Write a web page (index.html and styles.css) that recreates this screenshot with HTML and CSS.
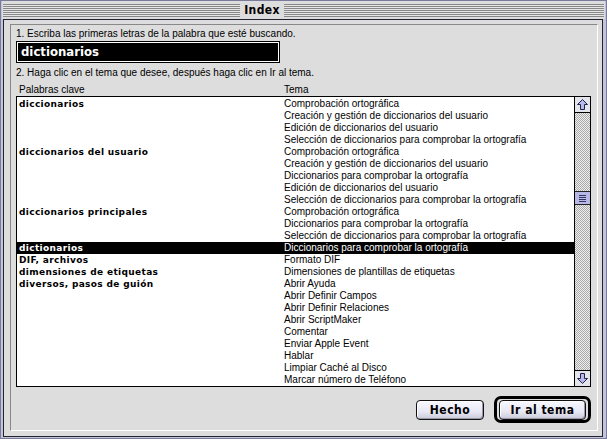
FILE: index.html
```html
<!DOCTYPE html>
<html lang="es">
<head>
<meta charset="utf-8">
<title>Index</title>
<link rel="stylesheet" href="styles.css">
</head>
<body>
<div class="window">
  <div class="titlebar"><span class="title">Index</span></div>
  <div class="body">
    <div class="panel">
      <p class="step step1">1. Escriba las primeras letras de la palabra que esté buscando.</p>
      <div class="search">dictionarios</div>
      <p class="step step2">2. Haga clic en el tema que desee, después haga clic en Ir al tema.</p>
      <div class="cols"><span class="col-kw">Palabras clave</span><span class="col-tema">Tema</span></div>
      <div class="list">
        <div class="rows">
          <div class="row"><span class="kw">diccionarios</span><span class="tema">Comprobación ortográfica</span></div>
          <div class="row"><span class="kw"></span><span class="tema">Creación y gestión de diccionarios del usuario</span></div>
          <div class="row"><span class="kw"></span><span class="tema">Edición de diccionarios del usuario</span></div>
          <div class="row"><span class="kw"></span><span class="tema">Selección de diccionarios para comprobar la ortografía</span></div>
          <div class="row"><span class="kw">diccionarios del usuario</span><span class="tema">Comprobación ortográfica</span></div>
          <div class="row"><span class="kw"></span><span class="tema">Creación y gestión de diccionarios del usuario</span></div>
          <div class="row"><span class="kw"></span><span class="tema">Diccionarios para comprobar la ortografía</span></div>
          <div class="row"><span class="kw"></span><span class="tema">Edición de diccionarios del usuario</span></div>
          <div class="row"><span class="kw"></span><span class="tema">Selección de diccionarios para comprobar la ortografía</span></div>
          <div class="row"><span class="kw">diccionarios principales</span><span class="tema">Comprobación ortográfica</span></div>
          <div class="row"><span class="kw"></span><span class="tema">Diccionarios para comprobar la ortografía</span></div>
          <div class="row"><span class="kw"></span><span class="tema">Selección de diccionarios para comprobar la ortografía</span></div>
          <div class="row selected"><span class="kw">dictionarios</span><span class="tema">Diccionarios para comprobar la ortografía</span></div>
          <div class="row"><span class="kw">DIF, archivos</span><span class="tema">Formato DIF</span></div>
          <div class="row"><span class="kw">dimensiones de etiquetas</span><span class="tema">Dimensiones de plantillas de etiquetas</span></div>
          <div class="row"><span class="kw">diversos, pasos de guión</span><span class="tema">Abrir Ayuda</span></div>
          <div class="row"><span class="kw"></span><span class="tema">Abrir Definir Campos</span></div>
          <div class="row"><span class="kw"></span><span class="tema">Abrir Definir Relaciones</span></div>
          <div class="row"><span class="kw"></span><span class="tema">Abrir ScriptMaker</span></div>
          <div class="row"><span class="kw"></span><span class="tema">Comentar</span></div>
          <div class="row"><span class="kw"></span><span class="tema">Enviar Apple Event</span></div>
          <div class="row"><span class="kw"></span><span class="tema">Hablar</span></div>
          <div class="row"><span class="kw"></span><span class="tema">Limpiar Caché al Disco</span></div>
          <div class="row"><span class="kw"></span><span class="tema">Marcar número de Teléfono</span></div>
        </div>
        <div class="scrollbar">
          <div class="arrow arrow-up">
            <svg width="13" height="13" viewBox="0 0 13 13"><path d="M6.5 1.5 L11.5 6.5 L8.5 6.5 L8.5 11.5 L4.5 11.5 L4.5 6.5 L1.5 6.5 Z" fill="#b8b8f0" stroke="#222244" stroke-width="1"/></svg>
          </div>
          <div class="track">
            <div class="thumb"><span></span><span></span><span></span><span></span></div>
          </div>
          <div class="arrow arrow-down">
            <svg width="13" height="13" viewBox="0 0 13 13"><path d="M6.5 11.5 L11.5 6.5 L8.5 6.5 L8.5 1.5 L4.5 1.5 L4.5 6.5 L1.5 6.5 Z" fill="#b8b8f0" stroke="#222244" stroke-width="1"/></svg>
          </div>
        </div>
      </div>
      <div class="buttons">
        <button class="btn btn-done">Hecho</button>
        <span class="default-ring"><button class="btn btn-default">Ir al tema</button></span>
      </div>
    </div>
  </div>
</div>
</body>
</html>
```
FILE: styles.css
```css
* { box-sizing: border-box; }
html, body { margin: 0; padding: 0; background: #dddddd; }

.window {
  width: 607px;
  height: 439px;
  border: 1px solid #7a7a9a;
  background: #c4c4d8;
  display: flex;
  flex-direction: column;
  font-family: "Liberation Sans", Arial, sans-serif;
  color: #000;
}

.titlebar {
  height: 18px;
  margin: 0 1px;
  display: flex;
  justify-content: flex-start;
  align-items: center;
  padding-left: 238px;
  background:
    repeating-linear-gradient(to bottom, #888888 0, #888888 1px, #e6e6e6 1px, #e6e6e6 2px) 1px 3px / calc(100% - 2px) 13px no-repeat,
    #dddddd;
}

.title {
  background: #dddddd;
  width: 44px;
  text-align: center;
  height: 18px;
  line-height: 18px;
  font-family: "DejaVu Sans Condensed", "DejaVu Sans", sans-serif;
  font-weight: bold;
  font-size: 12px;
  letter-spacing: 0.4px;
}

.body {
  flex: 1;
  margin: 0 3px 1px 2px;
  border: 1px solid #222233;
  background: #dddddd;
  padding: 4px 4px 5px 6px;
  display: flex;
}

.panel {
  flex: 1;
  border: 1px solid;
  border-color: #888888 #ffffff #ffffff #888888;
  padding: 3px 6px 0 5px;
  display: flex;
  flex-direction: column;
  font-size: 10px;
}

.step {
  margin: 0;
  line-height: 12px;
  white-space: nowrap;
}

.search {
  margin-top: 1px;
  width: 264px;
  height: 22px;
  background: #000;
  border: 1px solid #000;
  box-shadow: inset 0 0 0 1px #ffffff, inset 0 0 0 2px #000;
  color: #fff;
  font-family: "DejaVu Sans Condensed", "DejaVu Sans", sans-serif;
  font-weight: bold;
  font-size: 13px;
  line-height: 20px;
  padding-left: 4px;
  letter-spacing: 0;
}

.step2 { margin-top: 4px; }

.cols {
  margin-top: 5px;
  line-height: 12px;
  display: flex;
  padding-left: 3px;
}
.col-kw { width: 265px; }

.list {
  height: 291px;
  border: 1px solid #000;
  background: #fff;
  display: flex;
}

.rows {
  flex: 1;
  padding-top: 1px;
}

.row {
  height: 12px;
  line-height: 12px;
  display: flex;
  white-space: nowrap;
}
.row .kw {
  width: 267px;
  padding-left: 2px;
  font-family: "DejaVu Sans", sans-serif;
  font-weight: bold;
  font-size: 9px;
  letter-spacing: 0.35px;
}
.row .tema { font-size: 10px; }
.row.selected { background: #000; color: #fff; }

.scrollbar {
  width: 16px;
  border-left: 1px solid #000;
  display: flex;
  flex-direction: column;
}

.arrow {
  height: 16px;
  display: flex;
  align-items: center;
  justify-content: center;
  background: #e4e4ec;
}
.arrow-up { border-bottom: 1px solid #000; }
.arrow-down { border-top: 1px solid #000; }

.track {
  flex: 1;
  background-color: #eeeeee;
  background-image: url("data:image/svg+xml,%3Csvg xmlns='http://www.w3.org/2000/svg' width='2' height='2' shape-rendering='crispEdges'%3E%3Crect width='2' height='2' fill='%23eeeeee'/%3E%3Crect width='1' height='1' fill='%23aaaaaa'/%3E%3Crect x='1' y='1' width='1' height='1' fill='%23aaaaaa'/%3E%3C/svg%3E");
  background-size: 2px 2px;
  padding-top: 78px;
}

.thumb {
  height: 14px;
  border-top: 1px solid #222;
  border-bottom: 1px solid #222;
  background: #b8b8e4;
  display: flex;
  flex-direction: column;
  align-items: center;
  justify-content: center;
  gap: 1px;
}
.thumb span {
  width: 7px;
  height: 1px;
  background: #333366;
}

.buttons {
  margin-top: 9px;
  display: flex;
  justify-content: flex-end;
  align-items: center;
  gap: 10px;
}

.btn {
  font-family: "DejaVu Sans Condensed", "DejaVu Sans", sans-serif;
  font-weight: bold;
  font-size: 12px;
  letter-spacing: 0.5px;
  color: #000;
  height: 20px;
  border: 1px solid #111;
  border-radius: 4px;
  background: linear-gradient(to bottom, #f8f8ff 0%, #e8e8f4 60%, #c8c8d8 100%);
  box-shadow: inset -1px -1px 0 #9999aa, inset 1px 1px 0 #ffffff;
  padding: 0;
  margin: 0;
}
.btn-done { width: 68px; }

.default-ring {
  display: inline-flex;
  border: 3px solid #000;
  border-radius: 7px;
  width: 97px;
  height: 27px;
  align-items: center;
  justify-content: center;
  background: #dddddd;
}
.btn-default { width: 87px; }
```
